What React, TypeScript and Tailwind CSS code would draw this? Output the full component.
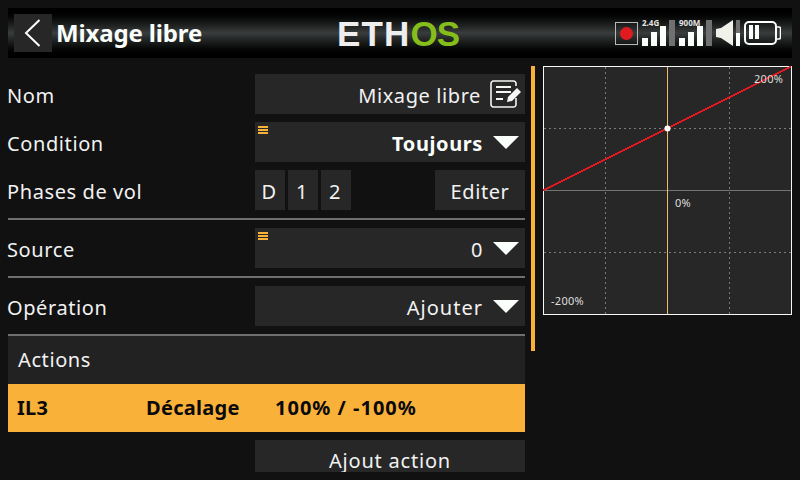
const font = "font-['Noto_Sans',sans-serif]";

function MenuMark() {
  return (
    <div className="absolute left-[3px] top-[4px] flex w-[10px] flex-col gap-px">
      <div className="h-[2px] bg-[#f9b13a]" />
      <div className="h-[2px] bg-[#f9b13a]" />
      <div className="h-[2px] bg-[#f9b13a]" />
    </div>
  );
}

function Caret() {
  return (
    <svg width="26" height="13" viewBox="0 0 26 13" className="ml-[10px] mr-[6px] shrink-0">
      <polygon points="0,0 26,0 13,13" fill="#fbfffb" />
    </svg>
  );
}

function EditIcon() {
  return (
    <svg width="32" height="28" viewBox="0 0 32 28" fill="none" stroke="#f4f6f4" className="ml-[9px] mr-[3px] shrink-0">
      <path d="M26 6V3.5a2.5 2.5 0 0 0-2.5-2.5H3.5A2.5 2.5 0 0 0 1 3.5v21A2.5 2.5 0 0 0 3.5 27h20a2.5 2.5 0 0 0 2.5-2.5V18" strokeWidth="1.6" />
      <path d="M6 7h15M6 12h15M6 19h7" strokeWidth="1.8" />
      <path d="M17 22l1-5L27 8l4 4-9 9z" fill="#f4f6f4" stroke="none" />
    </svg>
  );
}

function Signal({ label }: { label: string }) {
  return (
    <div className="relative flex h-[26px] items-end gap-[3px]">
      <div className="h-[8px] w-[6px] bg-[#fbfffb]" />
      <div className="h-[14px] w-[6px] bg-[#fbfffb]" />
      <div className="h-[20px] w-[6px] bg-[#fbfffb]" />
      <div className="h-[26px] w-[6px] bg-[#707070]" />
      <span className="absolute left-0 top-[-1px] text-[8px] leading-[8px] font-bold text-[#e4e4e4] font-['Noto_Sans',sans-serif]">
        {label}
      </span>
    </div>
  );
}

function Row({ label, children }: { label: string; children: React.ReactNode }) {
  return (
    <div className="flex h-[40px] items-center">
      <span className="-ml-px w-[248px] pt-[4px] text-[20px] tracking-[0.6px] text-[#f2f2f2]">{label}</span>
      {children}
    </div>
  );
}

function Value({ children }: { children: React.ReactNode }) {
  return <span className="pt-[4px] tracking-[0.6px]">{children}</span>;
}

function Divider() {
  return <div className="h-[2px] bg-[#6f6f6f]" />;
}

function Chart() {
  return (
    <div className="relative h-[249px] w-[249px] bg-[#272727]">
      <svg width="249" height="249" viewBox="0 0 249 249" className="block" shapeRendering="crispEdges">
        <path d="M62.5 1V248M186.5 1V248M1 62.5H248M1 186.5H248" stroke="#7a7a7a" strokeDasharray="2 3" />
        <path d="M1 124.5H248" stroke="#747474" />
        <path d="M124.5 1V248" stroke="#f2bb68" />
        <rect x="0.5" y="0.5" width="248" height="248" fill="none" stroke="#f7f7f7" />
        <path d="M0 124.5L248 0.5" stroke="#e8191e" strokeWidth="1.6" />
        <circle cx="124.5" cy="62.5" r="3" fill="#fff" shapeRendering="auto" />
      </svg>
      <span className="absolute left-[211px] top-[6px] text-[11px] leading-[13px] tracking-[0.3px] text-[#dedede]">200%</span>
      <span className="absolute left-[132px] top-[130px] text-[11px] leading-[13px] tracking-[0.3px] text-[#dedede]">0%</span>
      <span className="absolute left-[8px] top-[228px] text-[11px] leading-[13px] tracking-[0.3px] text-[#dedede]">-200%</span>
    </div>
  );
}

export default function App() {
  return (
    <div className={`h-[480px] w-[800px] overflow-hidden bg-[#111111] ${font}`}>
      <div className="px-2 pt-2">
        <header className="flex h-[50px] items-center bg-gradient-to-b from-[#000000] via-[#3a3d3d] to-[#000000] pl-[6px] pr-[11px]">
          <div className="flex h-[38px] w-[38px] items-center justify-center bg-[#272727]">
            <svg width="18" height="28" viewBox="0 0 18 28" fill="none" stroke="#fbfffb" strokeWidth="2">
              <path d="M15.5 1L2 14l13.5 13" />
            </svg>
          </div>
          <h1 className="ml-[4px] w-[281px] text-[24px] font-bold tracking-[-0.15px] text-[#fbfffb]">Mixage libre</h1>
          <div className="w-[278px] text-[35px] leading-none font-bold tracking-[1.2px] font-['Liberation_Sans',sans-serif] text-[#eeeeee]">
            ETH<span className="tracking-[-1px] text-[#85bd1b]">OS</span>
          </div>
          <div className="flex items-center">
            <div className="flex h-[23px] w-[23px] items-center justify-center border border-[#b8b8b8]">
              <div className="h-[13px] w-[13px] rounded-full bg-[#e01b1f]" />
            </div>
            <div className="ml-[4px]">
              <Signal label="2.4G" />
            </div>
            <div className="ml-[4px]">
              <Signal label="900M" />
            </div>
            <svg width="18" height="26" viewBox="0 0 18 26" className="ml-[4px]">
              <polygon points="0,9 5,8 17,0 17,26 5,18 0,17" fill="#f0f2ea" />
            </svg>
            <div className="ml-[2px] flex h-[26px] w-[4px] flex-col">
              <div className="h-[13px] bg-[#707070]" />
              <div className="h-[13px] bg-[#fbfffb]" />
            </div>
            <svg width="37" height="24" viewBox="0 0 37 24" fill="none" stroke="#fbfffb" className="ml-[4px]">
              <rect x="1" y="1" width="31" height="22" rx="4" strokeWidth="2" />
              <path d="M32 6h3a1.5 1.5 0 0 1 1.5 1.5v9A1.5 1.5 0 0 1 35 18h-3" strokeWidth="1.5" />
              <path d="M5 4h4v14H5zM11 4h4v14h-4z" fill="#fbfffb" stroke="none" />
            </svg>
          </div>
        </header>

        <div className="mt-2 flex">
          <main className="w-[517px] pt-2">
            <Row label="Nom">
              <div className="flex h-[40px] w-[270px] items-center justify-end bg-[#272727] text-[20px] text-[#f2f2f2]">
                <Value>Mixage libre</Value>
                <EditIcon />
              </div>
            </Row>
            <div className="mt-2">
              <Row label="Condition">
                <div className="relative flex h-[40px] w-[270px] items-center justify-end bg-[#272727] text-[20px] font-bold text-[#fbfffb]">
                  <MenuMark />
                  <Value>Toujours</Value>
                  <Caret />
                </div>
              </Row>
            </div>
            <div className="mt-2">
              <Row label="Phases de vol">
                <div className="flex w-[270px] items-center">
                  {["D", "1", "2"].map((p) => (
                    <div key={p} className="mr-[3px] flex h-[40px] w-[30px] items-center justify-center bg-[#272727] pr-[2px] text-[20px] text-[#f2f2f2]">
                      <Value>{p}</Value>
                    </div>
                  ))}
                  <div className="ml-auto flex h-[40px] w-[90px] items-center justify-center bg-[#272727] text-[20px] text-[#f2f2f2]">
                    <Value>Editer</Value>
                  </div>
                </div>
              </Row>
            </div>
            <div className="mt-2">
              <Divider />
            </div>
            <div className="mt-2">
              <Row label="Source">
                <div className="relative flex h-[40px] w-[270px] items-center justify-end bg-[#272727] text-[20px] text-[#f2f2f2]">
                  <MenuMark />
                  <Value>0</Value>
                  <Caret />
                </div>
              </Row>
            </div>
            <div className="mt-2">
              <Divider />
            </div>
            <div className="mt-2">
              <Row label="Opération">
                <div className="flex h-[40px] w-[270px] items-center justify-end bg-[#272727] text-[20px] text-[#f2f2f2]">
                  <span className="pt-[4px] tracking-[1px]">Ajouter</span>
                  <Caret />
                </div>
              </Row>
            </div>
            <div className="mt-2">
              <Divider />
            </div>
            <div className="flex h-[48px] items-center bg-[#222222] pl-[10px] text-[20px] tracking-[0.6px] text-[#f2f2f2]">Actions</div>
            <div className="flex h-[48px] items-center bg-[#f9b13a] pl-[9px] text-[20px] font-bold tracking-[0.3px] text-[#0a0a0a]">
              <span className="w-[129px]">IL3</span>
              <span className="w-[129px]">Décalage</span>
              <span className="tracking-[1px]">100% / -100%</span>
            </div>
            <div className="mt-2 flex justify-end">
              <div className="flex h-[32px] w-[270px] items-start justify-center overflow-hidden bg-[#272727] pt-[7px] text-[20px] leading-[28px] tracking-[0.8px] text-[#f2f2f2]">
                Ajout action
              </div>
            </div>
          </main>
          <div className="ml-[6px] h-[285px] w-[4px] bg-[#f9b13a]" />
          <div className="ml-2">
            <Chart />
          </div>
        </div>
      </div>
    </div>
  );
}
